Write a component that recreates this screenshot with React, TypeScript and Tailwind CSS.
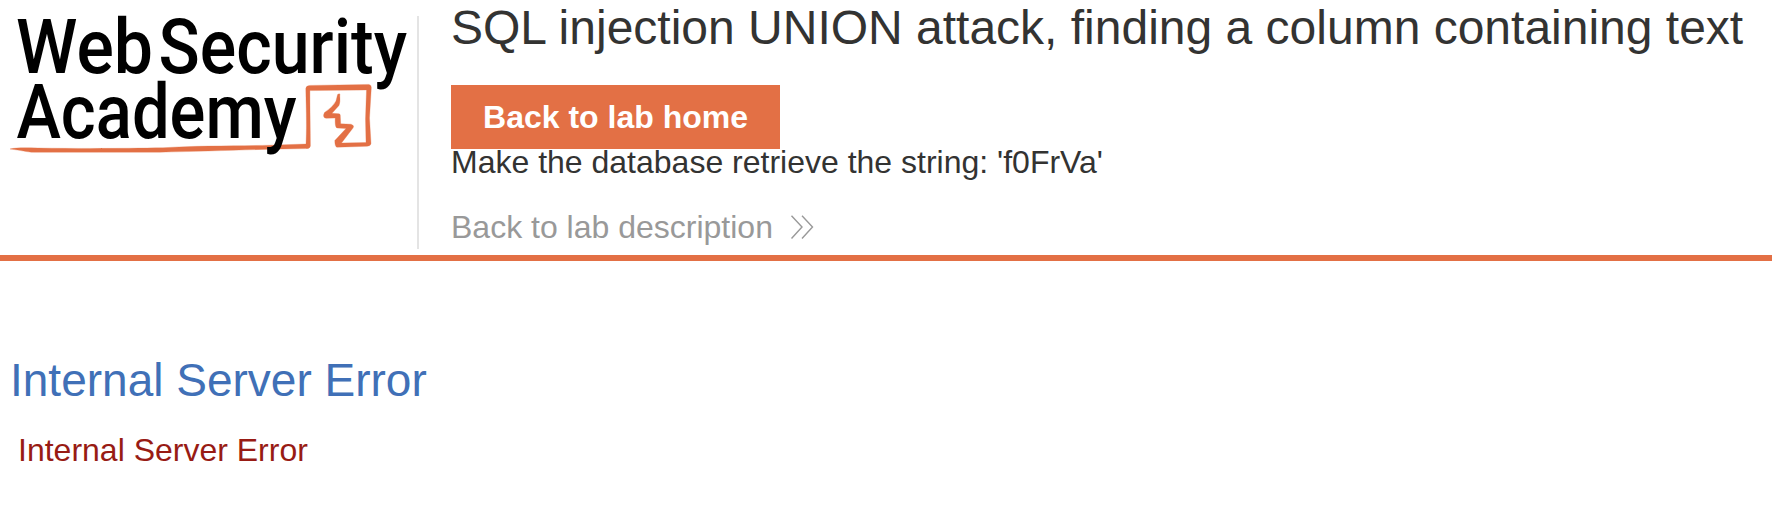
function AcademyLogo() {
  return (
    <svg className="block h-[170px] w-[417px] shrink-0 overflow-visible" viewBox="0 0 417 170" role="img" aria-label="Web Security Academy">
      <path
        d="M10 149 C17 147.300 27 147.800 38 148 C85 148.800 130 148.300 163 147.800 C195 145.500 240 146 270 145.200 L306 144 C307 122 306 105 305.800 88.500 Q306 85.500 310 85.400 L369 84.400 Q371.600 84.800 371.300 88 L369.500 118 L371 143.500 Q370.500 146.300 367 146.300 L337 147.200 Q334.800 147 334.800 140.500 L346 128.500 L337 128 Q334.800 127.500 335.200 118 L326 118.300 Q322 117.500 324.500 112.500 Q333 107 336 101 L337.600 94.500 Q340.500 92.500 339.800 96 Q340.500 102 339 105.500 L332 113.300 L339 113.700 Q340.500 114 340.300 116 L340.700 123.800 L351 124.200 Q355 125.500 352.800 128.300 L341.500 143 L366 142.500 L365.500 119 L366.500 90 L309.900 90.600 C309.900 110 310.400 130 310.400 146 Q309.800 149 306 148.600 L270 149.200 C240 150 195 151.500 160 152.200 L34 152.300 C26 152 22 150.500 10 149 Z"
        fill="#e37045"
        stroke="#e37045"
        strokeWidth=".3"
      />
      <g fill="#000" fontFamily="Roboto, sans-serif" fontWeight="500" fontSize="76">
        <text x="16" y="73.300" textLength="137" lengthAdjust="spacingAndGlyphs">Web</text>
        <text x="158.500" y="73.300" textLength="248.500" lengthAdjust="spacingAndGlyphs">Security</text>
        <text x="16.500" y="138.300" textLength="280" lengthAdjust="spacingAndGlyphs">Academy</text>
      </g>
    </svg>
  );
}

function DoubleChevron() {
  return (
    <svg className="mt-[-1px] h-6 w-6" viewBox="0 0 24 24" fill="none" stroke="#999" strokeWidth="1.400">
      <path d="M1.500 .8 12 12 1.500 23.500M12 .8 22.500 12 12 23.500" />
    </svg>
  );
}

export default function App() {
  return (
    <div className="h-[509px] w-full overflow-hidden bg-white font-['Liberation_Sans',Arial,sans-serif] text-[32px] leading-9 text-[#333332]">
      <header className="flex h-[261px] border-b-6 border-[#e37045]">
        <AcademyLogo />
        <div className="mt-4 h-[233px] w-0.5 shrink-0 bg-[#e4e4e4]" />
        <div className="flex flex-col items-start pl-8">
          <h2 className="h-[85px] text-[48px] leading-[55px] whitespace-nowrap">SQL injection UNION attack, finding a column containing text</h2>
          <a className="flex h-16 w-[329px] items-center justify-center bg-[#e37045] font-bold whitespace-nowrap text-white">Back to lab home</a>
          <p className="-mt-[5px] h-[65px] whitespace-nowrap">Make the database retrieve the string: 'f0FrVa'</p>
          <a className="flex items-center gap-[17px] whitespace-nowrap text-[#999]">
            Back to lab description
            <DoubleChevron />
          </a>
        </div>
      </header>
      <main className="px-2.5 pt-[92px]">
        <h1 className="text-[46px] leading-[54px] text-[#4070b7]">Internal Server Error</h1>
        <p className="mt-[25px] pl-2 text-[#981b14]">Internal Server Error</p>
      </main>
    </div>
  );
}
